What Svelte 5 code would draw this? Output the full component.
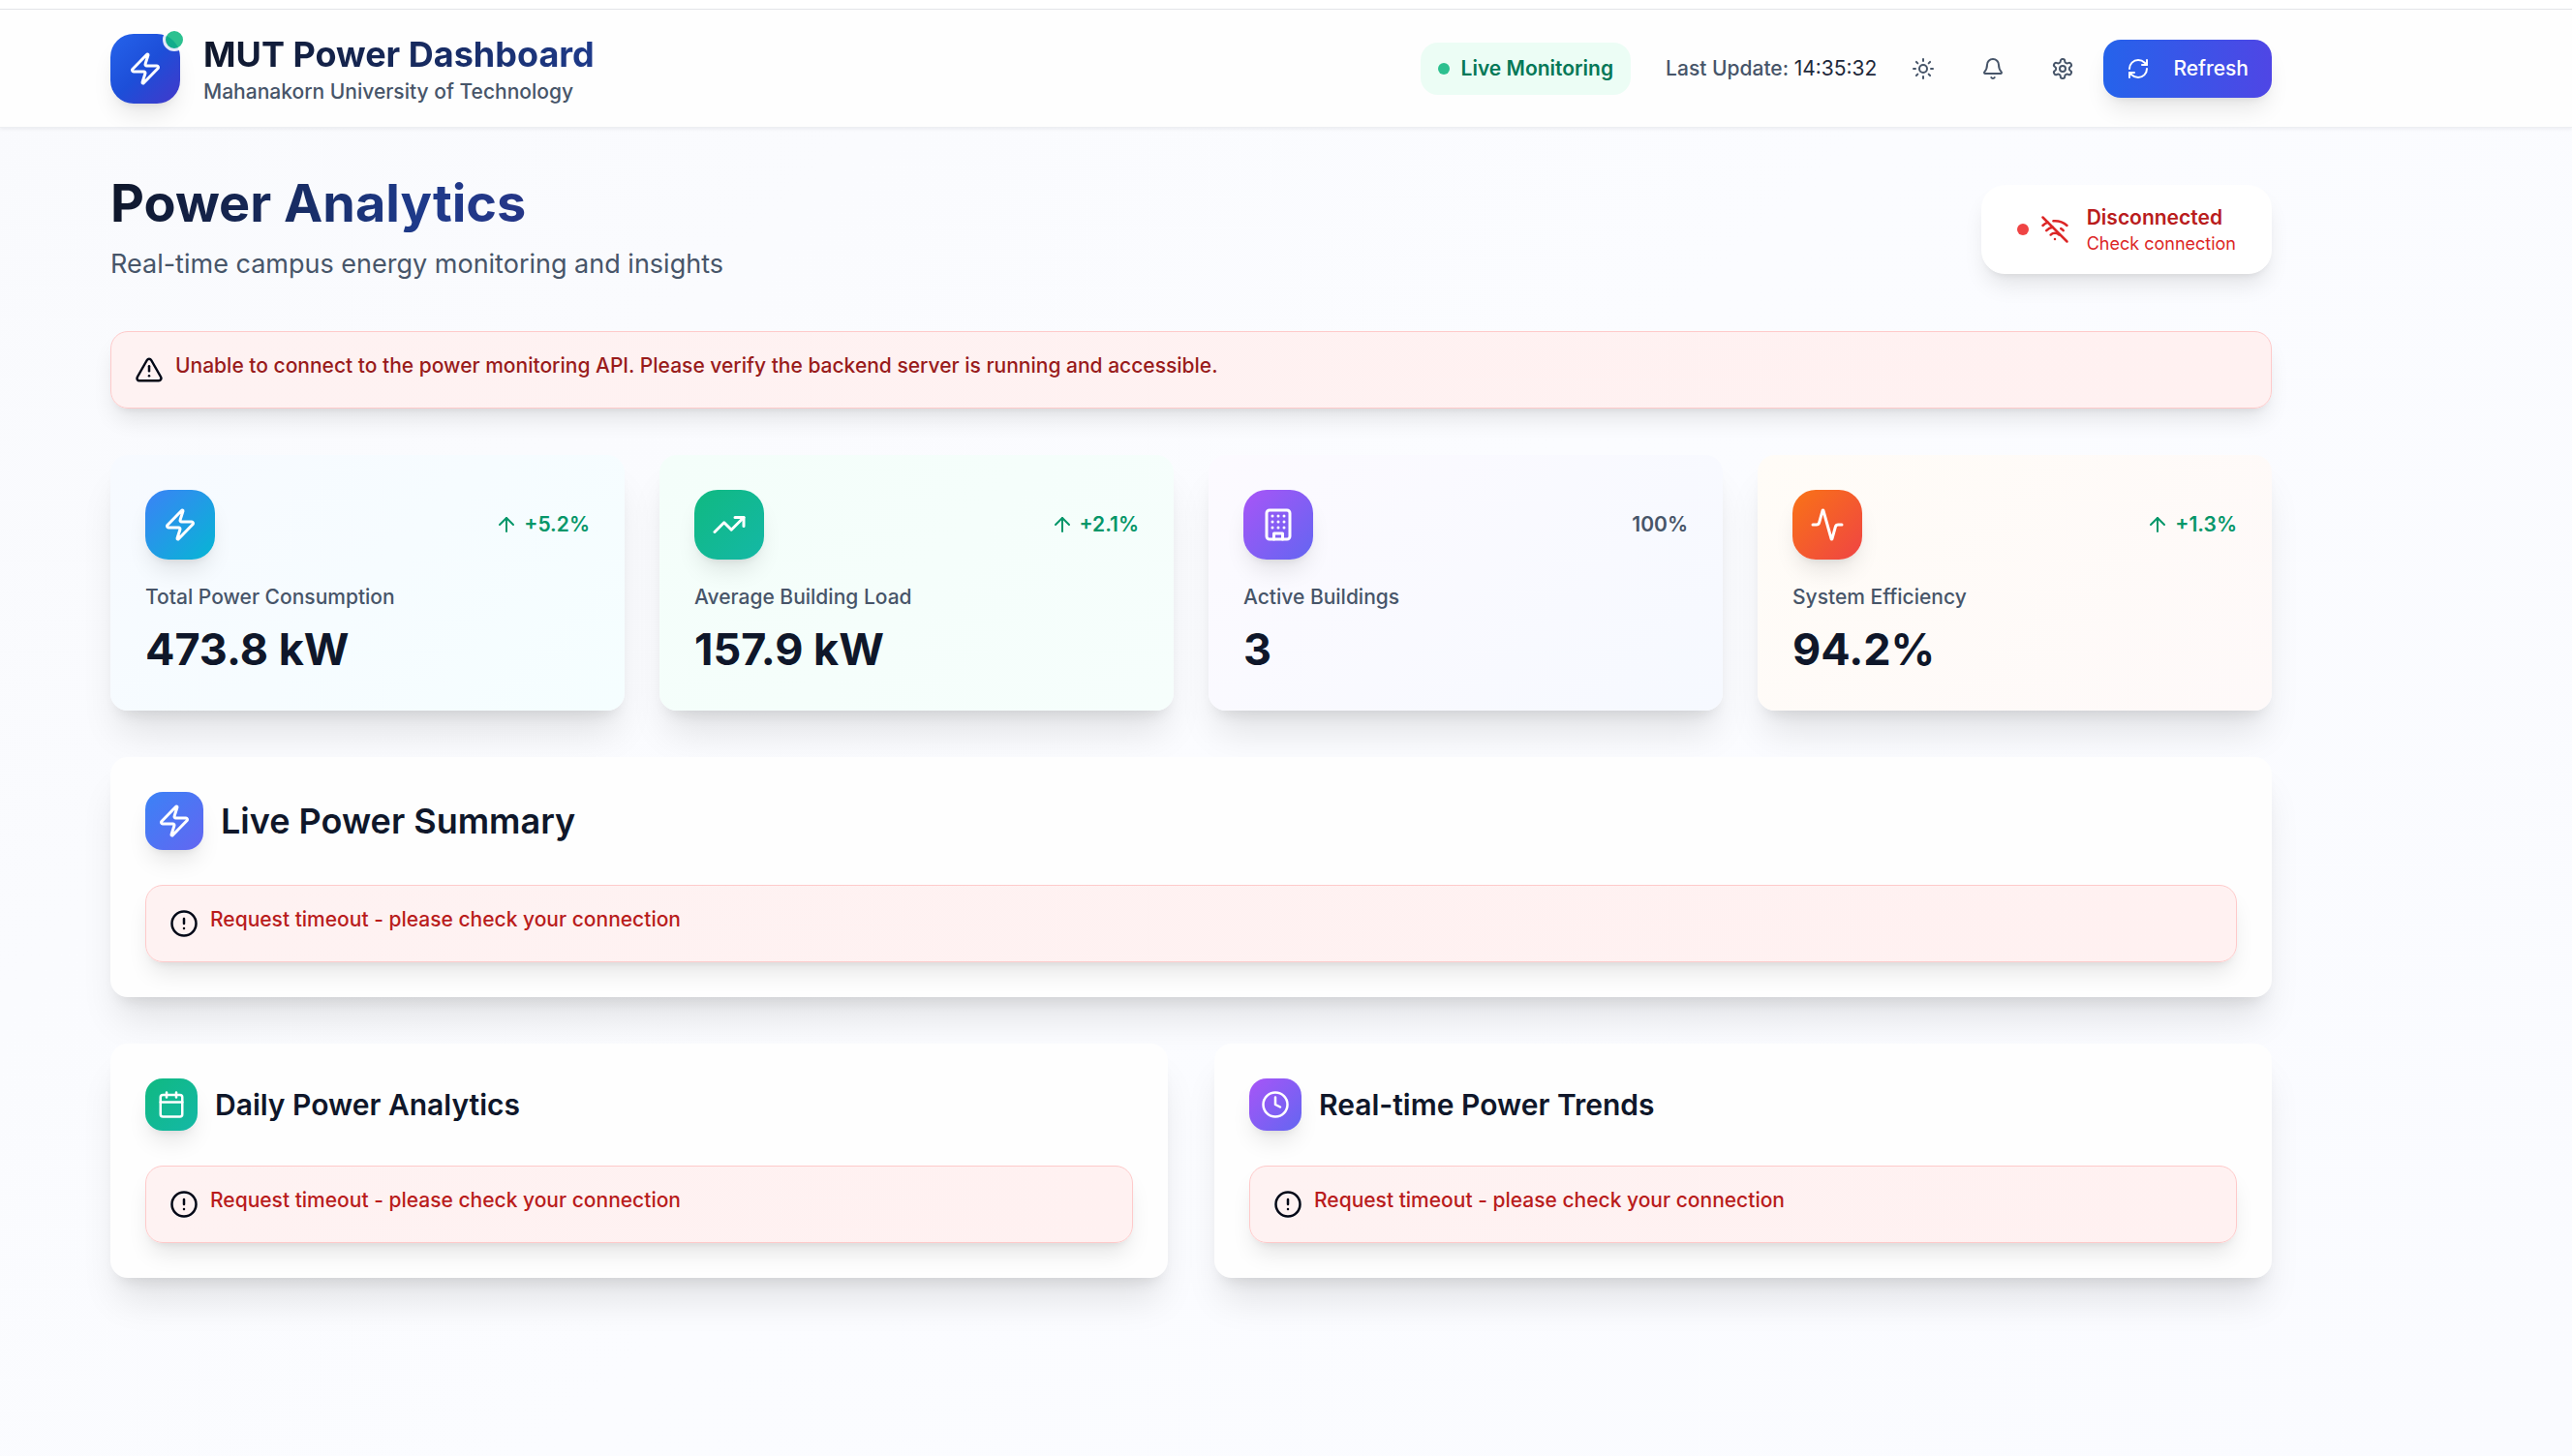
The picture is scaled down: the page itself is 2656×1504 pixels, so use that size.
<script>
  const paths = {
    zap: '<path d="M4 14a1 1 0 0 1-.78-1.63l9.9-10.2a.5.5 0 0 1 .86.46l-1.92 6.02A1 1 0 0 0 13 10h7a1 1 0 0 1 .78 1.63l-9.9 10.2a.5.5 0 0 1-.86-.46l1.92-6.02A1 1 0 0 0 11 14z"/>',
    sun: '<circle cx="12" cy="12" r="4"/><path d="M12 2v2"/><path d="M12 20v2"/><path d="m4.93 4.93 1.41 1.41"/><path d="m17.66 17.66 1.41 1.41"/><path d="M2 12h2"/><path d="M20 12h2"/><path d="m6.34 17.66-1.41 1.41"/><path d="m19.07 4.93-1.41 1.41"/>',
    bell: '<path d="M10.268 21a2 2 0 0 0 3.464 0"/><path d="M3.262 15.326A1 1 0 0 0 4 17h16a1 1 0 0 0 .74-1.673C19.41 13.956 18 12.499 18 8A6 6 0 0 0 6 8c0 4.499-1.411 5.956-2.738 7.326"/>',
    settings: '<path d="M12.22 2h-.44a2 2 0 0 0-2 2v.18a2 2 0 0 1-1 1.73l-.43.25a2 2 0 0 1-2 0l-.15-.08a2 2 0 0 0-2.73.73l-.22.38a2 2 0 0 0 .73 2.73l.15.1a2 2 0 0 1 1 1.72v.51a2 2 0 0 1-1 1.74l-.15.09a2 2 0 0 0-.73 2.73l.22.38a2 2 0 0 0 2.73.73l.15-.08a2 2 0 0 1 2 0l.43.25a2 2 0 0 1 1 1.73V20a2 2 0 0 0 2 2h.44a2 2 0 0 0 2-2v-.18a2 2 0 0 1 1-1.73l.43-.25a2 2 0 0 1 2 0l.15.08a2 2 0 0 0 2.73-.73l.22-.39a2 2 0 0 0-.73-2.73l-.15-.08a2 2 0 0 1-1-1.74v-.5a2 2 0 0 1 1-1.74l.15-.09a2 2 0 0 0 .73-2.73l-.22-.38a2 2 0 0 0-2.73-.73l-.15.08a2 2 0 0 1-2 0l-.43-.25a2 2 0 0 1-1-1.73V4a2 2 0 0 0-2-2z"/><circle cx="12" cy="12" r="3"/>',
    refresh: '<path d="M3 12a9 9 0 0 1 9-9 9.75 9.75 0 0 1 6.74 2.74L21 8"/><path d="M21 3v5h-5"/><path d="M21 12a9 9 0 0 1-9 9 9.75 9.75 0 0 1-6.74-2.74L3 16"/><path d="M8 16H3v5"/>',
    wifiOff: '<path d="M12 20h.01"/><path d="M8.5 16.429a5 5 0 0 1 7 0"/><path d="M5 12.859a10 10 0 0 1 5.17-2.69"/><path d="M19 12.859a10 10 0 0 0-2.007-1.523"/><path d="M2 8.82a15 15 0 0 1 4.177-2.643"/><path d="M22 8.82a15 15 0 0 0-11.288-3.764"/><path d="m2 2 20 20"/>',
    warning: '<path d="m21.73 18-8-14a2 2 0 0 0-3.48 0l-8 14A2 2 0 0 0 4 21h16a2 2 0 0 0 1.73-3"/><path d="M12 9v4"/><path d="M12 17h.01"/>',
    alert: '<circle cx="12" cy="12" r="10"/><path d="M12 8v4"/><path d="M12 16h.01"/>',
    trend: '<path d="M16 7h6v6"/><path d="m22 7-8.5 8.5-5-5L2 17"/>',
    building: '<rect width="16" height="20" x="4" y="2" rx="2" ry="2"/><path d="M9 22v-4h6v4"/><path d="M8 6h.01"/><path d="M16 6h.01"/><path d="M12 6h.01"/><path d="M12 10h.01"/><path d="M12 14h.01"/><path d="M16 10h.01"/><path d="M16 14h.01"/><path d="M8 10h.01"/><path d="M8 14h.01"/>',
    activity: '<path d="M22 12h-2.48a2 2 0 0 0-1.93 1.46l-2.35 8.36a.25.25 0 0 1-.48 0L9.24 2.18a.25.25 0 0 0-.48 0l-2.35 8.36A2 2 0 0 1 4.49 12H2"/>',
    arrowUp: '<path d="m5 12 7-7 7 7"/><path d="M12 19V5"/>',
    calendar: '<path d="M8 2v4"/><path d="M16 2v4"/><rect width="18" height="18" x="3" y="4" rx="2"/><path d="M3 10h18"/>',
    clock: '<circle cx="12" cy="12" r="10"/><path d="M12 6v6l4 2"/>'
  };

  const stats = [
    { icon: 'zap', tone: 'blue', label: 'Total Power Consumption', value: '473.8 kW', change: '+5.2%', up: true },
    { icon: 'trend', tone: 'green', label: 'Average Building Load', value: '157.9 kW', change: '+2.1%', up: true },
    { icon: 'building', tone: 'purple', label: 'Active Buildings', value: '3', change: '100%', up: false },
    { icon: 'activity', tone: 'orange', label: 'System Efficiency', value: '94.2%', change: '+1.3%', up: true }
  ];

  const timeout = 'Request timeout - please check your connection';

  const panels = [
    { icon: 'calendar', tone: 'green', title: 'Daily Power Analytics' },
    { icon: 'clock', tone: 'purple', title: 'Real-time Power Trends' }
  ];
</script>

{#snippet icon(name, size)}
  <svg class="icon {size}" viewBox="0 0 24 24" aria-hidden="true">{@html paths[name]}</svg>
{/snippet}

{#snippet alertBox(name, text)}
  <div class="alert" class:dark={name === 'warning'} role="alert">
    {@render icon(name, 'md')}
    <p>{text}</p>
  </div>
{/snippet}

<div class="page">
  <div class="strip"></div>
  <header>
    <div class="brand">
      <div class="logo">
        {@render icon('zap', 'lg')}
        <span class="badge"></span>
      </div>
      <div>
        <div class="name">MUT Power Dashboard</div>
        <div class="org">Mahanakorn University of Technology</div>
      </div>
    </div>
    <div class="tools">
      <div class="live"><span class="dot"></span>Live Monitoring</div>
      <div class="updated">Last Update: <time>14:35:32</time></div>
      <div class="actions">
        <button class="ghost" aria-label="Toggle theme">{@render icon('sun', 'sm')}</button>
        <button class="ghost" aria-label="Notifications">{@render icon('bell', 'sm')}</button>
        <button class="ghost" aria-label="Settings">{@render icon('settings', 'sm')}</button>
        <button class="refresh">{@render icon('refresh', 'sm')}Refresh</button>
      </div>
    </div>
  </header>

  <main>
    <section class="intro">
      <div>
        <h1>Power Analytics</h1>
        <p>Real-time campus energy monitoring and insights</p>
      </div>
      <div class="status">
        <span class="dot"></span>
        {@render icon('wifiOff', 'md')}
        <div class="status-text">
          <strong>Disconnected</strong>
          <span>Check connection</span>
        </div>
      </div>
    </section>

    {@render alertBox('warning', 'Unable to connect to the power monitoring API. Please verify the backend server is running and accessible.')}

    <section class="stats">
      {#each stats as s}
        <article class="stat {s.tone}">
          <div class="stat-top">
            <div class="tile big {s.tone}">{@render icon(s.icon, 'lg')}</div>
            <div class="change" class:up={s.up}>
              {#if s.up}{@render icon('arrowUp', 'sm')}{/if}{s.change}
            </div>
          </div>
          <div class="label">{s.label}</div>
          <div class="value">{s.value}</div>
        </article>
      {/each}
    </section>

    <section class="card">
      <div class="head">
        <div class="tile mid indigo">{@render icon('zap', 'lg')}</div>
        <h2>Live Power Summary</h2>
      </div>
      {@render alertBox('alert', timeout)}
    </section>

    <div class="panels">
      {#each panels as p}
        <section class="card">
          <div class="head">
            <div class="tile {p.tone}">{@render icon(p.icon, 'md')}</div>
            <h3>{p.title}</h3>
          </div>
          {@render alertBox('alert', timeout)}
        </section>
      {/each}
    </div>
  </main>
</div>

<style>
  :global(body) {
    margin: 0;
  }
  .page {
    --shadow-lg: 0 15px 23px -5px rgb(0 0 0 / 0.1), 0 6px 9px -6px rgb(0 0 0 / 0.1);
    --shadow-xl: 0 30px 38px -8px rgb(0 0 0 / 0.1), 0 12px 15px -9px rgb(0 0 0 / 0.1);
    box-sizing: border-box;
    min-height: 100vh;
    background: linear-gradient(135deg, #f9fafd, #fbfcff 50%, #fafbff);
    color: #0f172a;
    font-family: Inter, 'Liberation Sans', sans-serif;
    font-size: 21px;
    line-height: 30px;
  }
  h1, h2, h3, p {
    margin: 0;
  }
  .icon {
    flex: none;
    fill: none;
    stroke: currentColor;
    stroke-width: 2;
    stroke-linecap: round;
    stroke-linejoin: round;
  }
  .sm { width: 24px; height: 24px; }
  .md { width: 30px; height: 30px; }
  .lg { width: 36px; height: 36px; }

  .strip {
    height: 9px;
    background: #fff;
    border-bottom: 1px solid #e2e4e8;
  }
  header {
    display: flex;
    align-items: center;
    justify-content: space-between;
    padding: 22px 310px 21px 114px;
    border-bottom: 1px solid #edeff2;
    background: #fefefe;
    box-shadow: 0 2px 3px rgb(15 23 42 / 0.05);
  }
  .brand, .tools, .actions, .live, .intro, .status, .stat-top, .change, .head {
    display: flex;
    align-items: center;
  }
  .brand { gap: 24px; }
  .logo {
    position: relative;
    display: grid;
    place-items: center;
    width: 72px;
    height: 72px;
    border-radius: 24px;
    background: linear-gradient(135deg, #2563eb, #1d4ed8 50%, #4338ca);
    box-shadow: var(--shadow-lg);
    color: #fff;
  }
  .badge {
    position: absolute;
    top: -6px;
    right: -6px;
    box-sizing: border-box;
    width: 24px;
    height: 24px;
    border: 3px solid #fff;
    border-radius: 50%;
    background: #10b981;
    opacity: 0.88;
  }
  .name, h1 {
    background: linear-gradient(90deg, #0f172a, #1e3a8a);
    background-clip: text;
    color: transparent;
    font-weight: 700;
  }
  .name {
    font-size: 36px;
    line-height: 48px;
  }
  .org {
    color: #475569;
    font-weight: 500;
  }
  .live {
    gap: 12px;
    padding: 12px 18px;
    border-radius: 18px;
    background: #ecfdf5;
    color: #047857;
    font-weight: 600;
  }
  .dot {
    width: 12px;
    height: 12px;
    border-radius: 50%;
    background: #2cc08f;
  }
  .updated {
    margin: 0 18px 0 36px;
    color: #475569;
    font-weight: 500;
  }
  .updated time {
    color: #1e293b;
    font-weight: 400;
  }
  .actions { gap: 12px; }
  button {
    display: flex;
    align-items: center;
    justify-content: center;
    height: 60px;
    padding: 0;
    border: 0;
    border-radius: 18px;
    font: inherit;
    cursor: pointer;
  }
  .ghost {
    width: 60px;
    background: transparent;
    color: #475569;
  }
  .refresh {
    gap: 24px;
    padding: 0 24px;
    background: linear-gradient(90deg, #2563eb, #4f46e5);
    box-shadow: var(--shadow-lg);
    color: #fff;
    font-weight: 500;
  }

  main {
    display: grid;
    gap: 48px;
    padding: 48px 310px 48px 114px;
  }
  .intro { justify-content: space-between; }
  h1 {
    background-image: linear-gradient(90deg, #0f172a, #1e3a8a 50%, #312e81);
    font-size: 54px;
    line-height: 60px;
  }
  .intro p {
    margin-top: 12px;
    color: #475569;
    font-size: 27px;
    line-height: 42px;
  }
  .status {
    gap: 12px;
    padding: 18px 36px;
    border: 1px solid #fff;
    border-radius: 24px;
    background: #fff;
    box-shadow: var(--shadow-lg);
    color: #dc2626;
  }
  .status .dot { background: #ef4444; }
  .status-text {
    display: grid;
    margin-left: 6px;
    font-size: 18px;
    line-height: 24px;
  }
  .status strong {
    color: #b91c1c;
    font-size: 21px;
    line-height: 30px;
    font-weight: 600;
  }

  .alert {
    display: flex;
    gap: 12px;
    padding: 20px 24px 28px;
    border: 1px solid #fecaca;
    border-radius: 18px;
    background: linear-gradient(90deg, #fef2f2, #fff1f1);
    box-shadow: var(--shadow-lg);
    color: #020817;
  }
  .alert .icon { margin: 4px 0 -4px; }
  .alert p {
    color: #b91c1c;
    font-weight: 500;
  }
  .alert.dark p { color: #991b1b; }

  .stats {
    display: grid;
    grid-template-columns: repeat(4, 1fr);
    gap: 36px;
  }
  .stat, .card {
    padding: 36px;
    border-radius: 18px;
    background: #fefefe;
    box-shadow: var(--shadow-xl);
  }
  .stat.blue { background: linear-gradient(135deg, #f7faff, #f5feff); }
  .stat.green { background: linear-gradient(135deg, #f4fefa, #f6fefc); }
  .stat.purple { background: linear-gradient(135deg, #fcfaff, #f6f9ff); }
  .stat.orange { background: linear-gradient(135deg, #fffcf7, #fef9f9); }
  .stat-top { justify-content: space-between; }
  .tile {
    display: grid;
    place-items: center;
    width: 54px;
    height: 54px;
    border-radius: 18px;
    box-shadow: var(--shadow-lg);
    color: #fff;
  }
  .tile.mid { width: 60px; height: 60px; }
  .tile.big {
    width: 72px;
    height: 72px;
    border-radius: 24px;
  }
  .tile.blue { background: linear-gradient(135deg, #3b82f6, #06b6d4); }
  .tile.green { background: linear-gradient(135deg, #10b981, #14b8a6); }
  .tile.purple { background: linear-gradient(135deg, #a855f7, #6366f1); }
  .tile.orange { background: linear-gradient(135deg, #f97316, #ef4444); }
  .tile.indigo { background: linear-gradient(135deg, #3b82f6, #6366f1); }
  .change {
    gap: 6px;
    color: #475569;
    font-weight: 600;
  }
  .change.up { color: #059669; }
  .label {
    margin: 24px 0 12px;
    color: #475569;
    font-weight: 500;
  }
  .value {
    font-size: 45px;
    line-height: 54px;
    font-weight: 700;
  }

  .head {
    gap: 18px;
    margin-bottom: 36px;
  }
  h2, h3 { font-weight: 600; }
  h2 { font-size: 36px; line-height: 48px; }
  h3 { font-size: 30px; line-height: 42px; }
  .panels {
    display: grid;
    grid-template-columns: repeat(2, 1fr);
    gap: 48px;
  }
</style>
